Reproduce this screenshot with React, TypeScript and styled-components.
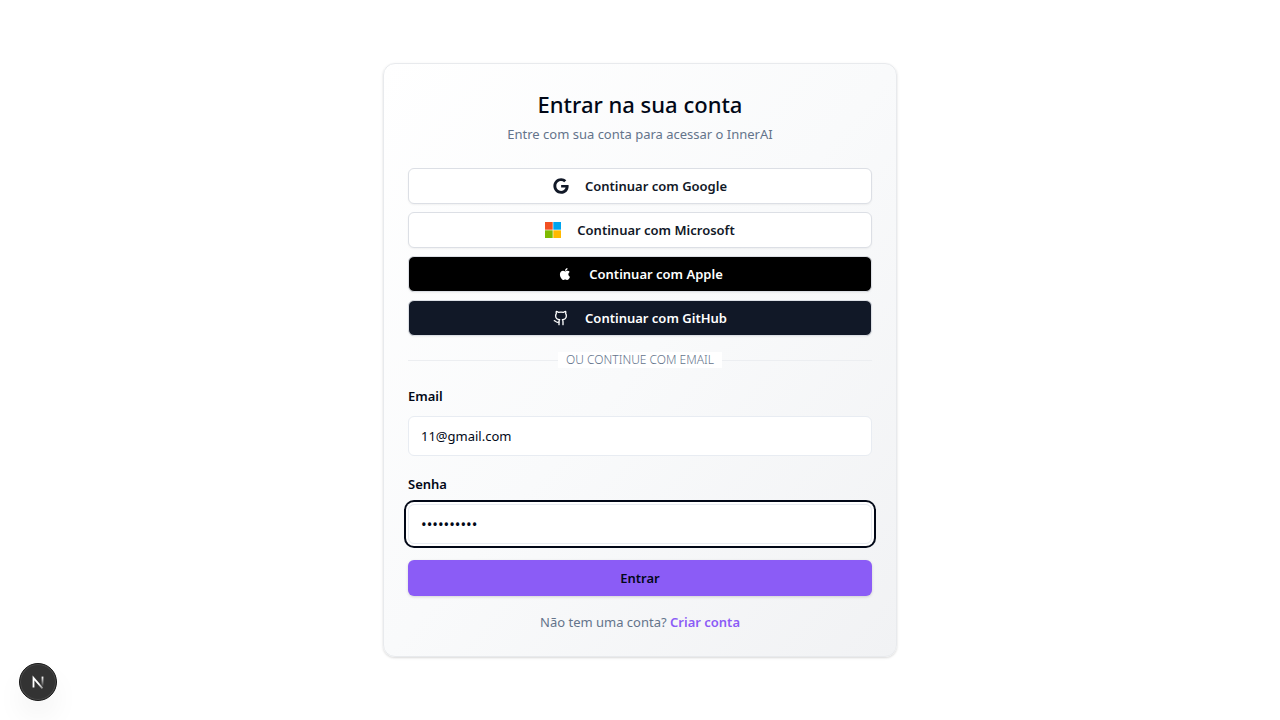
import React, { useState } from "react";
import styled, { createGlobalStyle, css } from "styled-components";
import { Github } from "lucide-react";
import { FaGoogle } from "react-icons/fa";

const GlobalStyle = createGlobalStyle`
  *, *::before, *::after { box-sizing: border-box; }
  body {
    margin: 0;
    background: #ffffff;
    color: #020817;
    font-family: "Segoe UI", "Noto Sans", "Open Sans", sans-serif;
    font-size: 13px;
    line-height: 20px;
  }
  button, input { font: inherit; color: inherit; }
`;

const Page = styled.main`
  min-height: 100vh;
  display: flex;
  align-items: center;
  justify-content: center;
`;

const Card = styled.section`
  width: 100%;
  max-width: 514px;
  padding: 24px;
  display: flex;
  flex-direction: column;
  gap: 24px;
  border: 1px solid #e8eaed;
  border-radius: 12px;
  background: linear-gradient(to bottom right, #ffffff, #f9fafb, #f1f2f4);
  box-shadow: 0 1px 3px rgba(0, 0, 0, 0.1), 0 1px 2px rgba(0, 0, 0, 0.06);
`;

const Header = styled.header`
  display: flex;
  flex-direction: column;
  gap: 4px;
  text-align: center;
`;

const Title = styled.h1`
  margin: 0;
  font-size: 22px;
  line-height: 32px;
  font-weight: 500;
`;

const Muted = styled.p`
  margin: 0;
  color: #64748b;
  text-align: center;
`;

const Content = styled.div`
  display: flex;
  flex-direction: column;
  gap: 16px;
`;

const Providers = styled.div`
  display: flex;
  flex-direction: column;
  gap: 8px;
`;

const Button = styled.button`
  height: 36px;
  width: 100%;
  display: flex;
  align-items: center;
  justify-content: center;
  gap: 16px;
  border-radius: 6px;
  font-weight: 600;
  cursor: pointer;
  box-shadow: 0 1px 2px rgba(0, 0, 0, 0.05);
`;

type Tone = "light" | "black" | "navy";

const tones = {
  light: css`background: #ffffff; color: #111827;`,
  black: css`background: #000000; color: #ffffff;`,
  navy: css`background: #111827; color: #ffffff;`,
};

const ProviderButton = styled(Button)<{ $tone: Tone }>`
  border: 1px solid #dcdfe5;
  ${(p) => tones[p.$tone]}
`;

const SubmitButton = styled(Button)`
  border: 0;
  background: #8b5cf6;
  color: #020817;
  box-shadow: 0 1px 3px rgba(0, 0, 0, 0.15);
`;

const Divider = styled.div`
  display: flex;
  align-items: center;
  &::before, &::after {
    content: "";
    flex: 1;
    height: 1px;
    background: #eceef1;
  }
`;

const DividerText = styled.span`
  padding: 0 8px;
  background: #ffffff;
  color: #64748b;
  font-size: 12px;
  line-height: 16px;
  font-weight: 300;
  text-transform: uppercase;
`;

const Form = styled.form`
  display: flex;
  flex-direction: column;
  gap: 16px;
`;

const Field = styled.div`
  display: flex;
  flex-direction: column;
  gap: 8px;
`;

const Label = styled.label`
  line-height: 24px;
  font-weight: 600;
`;

const Input = styled.input<{ $ring?: boolean }>`
  width: 100%;
  height: 40px;
  padding: 8px 12px;
  border: 1px solid #e8ecf2;
  border-radius: 6px;
  background: #ffffff;
  outline: none;
  &[type="password"] { font-size: 15px; }
  ${(p) => p.$ring && css`box-shadow: 0 0 0 2px #ffffff, 0 0 0 4px #020817;`}
`;

const Link = styled.a`
  color: #8b5cf6;
  font-weight: 600;
  text-decoration: none;
`;

const DevBadge = styled.button`
  position: fixed;
  left: 19px;
  bottom: 19px;
  width: 38px;
  height: 38px;
  padding: 0;
  display: flex;
  align-items: center;
  justify-content: center;
  border: 1px solid #171717;
  border-radius: 50%;
  background: #333333;
  box-shadow: inset 0 0 0 1px #4a4a4a, 0 16px 32px -8px rgba(0, 0, 0, 0.14);
`;

const MicrosoftLogo = () => (
  <svg width="16" height="16" viewBox="0 0 16 16" aria-hidden="true">
    <path fill="#f25022" d="M0 0h7.7v7.7H0z" />
    <path fill="#00a4ef" d="M8.3 0H16v7.7H8.3z" />
    <path fill="#7fba00" d="M0 8.3h7.7V16H0z" />
    <path fill="#ffb900" d="M8.3 8.3H16V16H8.3z" />
  </svg>
);

const AppleLogo = () => (
  <svg width="16" height="16" viewBox="0 0 24 24" fill="currentColor" aria-hidden="true">
    <path d="M17.05 20.28c-.98.95-2.05.8-3.08.35-1.09-.46-2.09-.48-3.24 0-1.44.62-2.2.44-3.06-.35C2.79 15.25 3.51 7.59 9.05 7.31c1.35.07 2.29.74 3.08.8 1.18-.24 2.31-.93 3.57-.84 1.51.12 2.65.72 3.4 1.8-3.12 1.87-2.38 5.98.48 7.13-.57 1.5-1.31 2.99-2.54 4.09zM12.03 7.25c-.15-2.23 1.66-4.07 3.74-4.25.29 2.58-2.34 4.5-3.74 4.25z" />
  </svg>
);

const NextMark = () => (
  <svg width="40" height="40" viewBox="0 0 40 40" fill="none" aria-hidden="true">
    <defs>
      <linearGradient id="diagonal" x1="22" y1="21" x2="26" y2="27" gradientUnits="userSpaceOnUse">
        <stop stopColor="#fff" />
        <stop offset="1" stopColor="#fff" stopOpacity="0.4" />
      </linearGradient>
      <linearGradient id="stem" x1="25" y1="14" x2="25" y2="25" gradientUnits="userSpaceOnUse">
        <stop stopColor="#fff" />
        <stop offset="1" stopColor="#fff" stopOpacity="0" />
      </linearGradient>
    </defs>
    <path d="M15 26V15.5L25 27" stroke="url(#diagonal)" strokeWidth="2" />
    <path d="M25 14v11" stroke="url(#stem)" strokeWidth="2" />
  </svg>
);

const providers: { name: string; tone: Tone; icon: React.ReactNode }[] = [
  { name: "Google", tone: "light", icon: <FaGoogle size={16} /> },
  { name: "Microsoft", tone: "light", icon: <MicrosoftLogo /> },
  { name: "Apple", tone: "black", icon: <AppleLogo /> },
  { name: "GitHub", tone: "navy", icon: <Github size={16} /> },
];

export default function App() {
  const [email, setEmail] = useState("11@gmail.com");
  const [password, setPassword] = useState("1234567890");

  return (
    <>
      <GlobalStyle />
      <Page>
        <Card>
          <Header>
            <Title>Entrar na sua conta</Title>
            <Muted>Entre com sua conta para acessar o InnerAI</Muted>
          </Header>
          <Content>
            <Providers>
              {providers.map((p) => (
                <ProviderButton key={p.name} type="button" $tone={p.tone}>
                  {p.icon}
                  Continuar com {p.name}
                </ProviderButton>
              ))}
            </Providers>
            <Divider>
              <DividerText>Ou continue com email</DividerText>
            </Divider>
            <Form onSubmit={(e) => e.preventDefault()}>
              <Field>
                <Label htmlFor="email">Email</Label>
                <Input id="email" type="email" value={email} onChange={(e) => setEmail(e.target.value)} />
              </Field>
              <Field>
                <Label htmlFor="password">Senha</Label>
                <Input
                  id="password"
                  type="password"
                  $ring
                  value={password}
                  onChange={(e) => setPassword(e.target.value)}
                />
              </Field>
              <SubmitButton type="submit">Entrar</SubmitButton>
            </Form>
            <Muted>
              Não tem uma conta? <Link href="#criar-conta">Criar conta</Link>
            </Muted>
          </Content>
        </Card>
      </Page>
      <DevBadge type="button" aria-label="Next.js">
        <NextMark />
      </DevBadge>
    </>
  );
}
